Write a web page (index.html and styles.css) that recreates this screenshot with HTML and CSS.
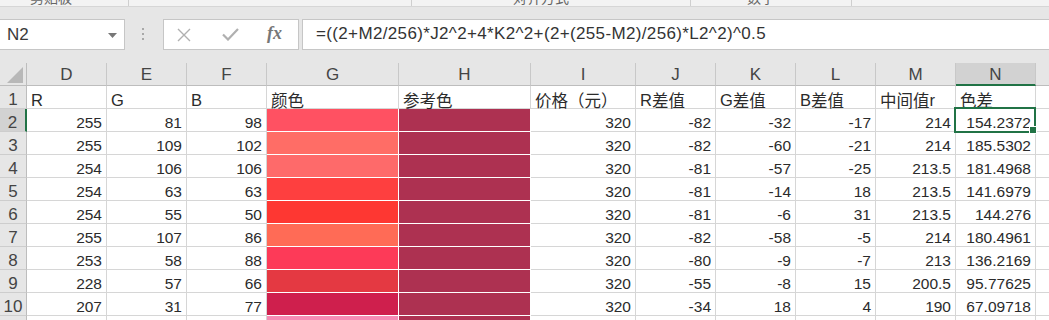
FILE: index.html
```html
<!DOCTYPE html>
<html lang="zh">
<head>
<meta charset="utf-8">
<title>Sheet</title>
<link rel="stylesheet" href="styles.css">
</head>
<body>
<div class="app">
  <div class="ribbon">
    <div class="grp g1"><span class="glabel">剪贴板</span></div>
    <div class="grp g2"></div>
    <div class="grp g3"><span class="glabel">对齐方式</span></div>
    <div class="grp g4"><span class="glabel">数字</span></div>
    <div class="grp g5"></div>
  </div>

  <div class="fbar">
    <div class="namebox">
      <span class="nb-text">N2</span>
      <svg class="nb-arrow" width="9" height="5" viewBox="0 0 9 5"><path d="M0 0H9L4.5 5Z" fill="#777"/></svg>
    </div>
    <div class="grip"><i></i><i></i><i></i></div>
    <div class="fbtns">
      <svg class="ico-x" width="14" height="14" viewBox="0 0 14 14"><path d="M1 1L13 13M13 1L1 13" stroke="#b0b0b0" stroke-width="1.4" fill="none"/></svg>
      <svg class="ico-ok" width="17" height="13" viewBox="0 0 17 13"><path d="M1 6.5L6 11.5L16 1" stroke="#b0b0b0" stroke-width="2.2" fill="none"/></svg>
      <span class="fx">fx</span>
    </div>
    <div class="finput">=((2+M2/256)*J2^2+4*K2^2+(2+(255-M2)/256)*L2^2)^0.5</div>
  </div>

  <div class="sheet">
    <div class="c corner"><svg width="16" height="16" viewBox="0 0 16 16"><path d="M16 0V16H0Z" fill="#b8b8b8"/></svg></div>
    <div class="c ch">D</div><div class="c ch">E</div><div class="c ch">F</div><div class="c ch">G</div><div class="c ch">H</div><div class="c ch">I</div><div class="c ch">J</div><div class="c ch">K</div><div class="c ch">L</div><div class="c ch">M</div><div class="c ch selh">N</div><div class="c ch">O</div>

    <div class="c rh">1</div>
    <div class="c t">R</div><div class="c t">G</div><div class="c t">B</div>
    <div class="c t"><span class="zh">颜色</span></div>
    <div class="c t"><span class="zh">参考色</span></div>
    <div class="c t"><span class="zh">价格（元）</span></div>
    <div class="c t">R<span class="zh">差值</span></div>
    <div class="c t">G<span class="zh">差值</span></div>
    <div class="c t">B<span class="zh">差值</span></div>
    <div class="c t"><span class="zh">中间值</span>r</div>
    <div class="c t"><span class="zh">色差</span></div>
    <div class="c"></div>

    <div class="c rh selr">2</div>
    <div class="c n">255</div><div class="c n">81</div><div class="c n">98</div>
    <div class="c fill" style="background:rgb(255,81,98)"></div><div class="c fill ref"></div>
    <div class="c n">320</div><div class="c n">-82</div><div class="c n">-32</div><div class="c n">-17</div><div class="c n">214</div><div class="c n sel">154.2372</div><div class="c"></div>

    <div class="c rh">3</div>
    <div class="c n">255</div><div class="c n">109</div><div class="c n">102</div>
    <div class="c fill" style="background:rgb(255,109,102)"></div><div class="c fill ref"></div>
    <div class="c n">320</div><div class="c n">-82</div><div class="c n">-60</div><div class="c n">-21</div><div class="c n">214</div><div class="c n">185.5302</div><div class="c"></div>

    <div class="c rh">4</div>
    <div class="c n">254</div><div class="c n">106</div><div class="c n">106</div>
    <div class="c fill" style="background:rgb(254,106,106)"></div><div class="c fill ref"></div>
    <div class="c n">320</div><div class="c n">-81</div><div class="c n">-57</div><div class="c n">-25</div><div class="c n">213.5</div><div class="c n">181.4968</div><div class="c"></div>

    <div class="c rh">5</div>
    <div class="c n">254</div><div class="c n">63</div><div class="c n">63</div>
    <div class="c fill" style="background:rgb(254,63,63)"></div><div class="c fill ref"></div>
    <div class="c n">320</div><div class="c n">-81</div><div class="c n">-14</div><div class="c n">18</div><div class="c n">213.5</div><div class="c n">141.6979</div><div class="c"></div>

    <div class="c rh">6</div>
    <div class="c n">254</div><div class="c n">55</div><div class="c n">50</div>
    <div class="c fill" style="background:rgb(254,55,50)"></div><div class="c fill ref"></div>
    <div class="c n">320</div><div class="c n">-81</div><div class="c n">-6</div><div class="c n">31</div><div class="c n">213.5</div><div class="c n">144.276</div><div class="c"></div>

    <div class="c rh">7</div>
    <div class="c n">255</div><div class="c n">107</div><div class="c n">86</div>
    <div class="c fill" style="background:rgb(255,107,86)"></div><div class="c fill ref"></div>
    <div class="c n">320</div><div class="c n">-82</div><div class="c n">-58</div><div class="c n">-5</div><div class="c n">214</div><div class="c n">180.4961</div><div class="c"></div>

    <div class="c rh">8</div>
    <div class="c n">253</div><div class="c n">58</div><div class="c n">88</div>
    <div class="c fill" style="background:rgb(253,58,88)"></div><div class="c fill ref"></div>
    <div class="c n">320</div><div class="c n">-80</div><div class="c n">-9</div><div class="c n">-7</div><div class="c n">213</div><div class="c n">136.2169</div><div class="c"></div>

    <div class="c rh">9</div>
    <div class="c n">228</div><div class="c n">57</div><div class="c n">66</div>
    <div class="c fill" style="background:rgb(228,57,66)"></div><div class="c fill ref"></div>
    <div class="c n">320</div><div class="c n">-55</div><div class="c n">-8</div><div class="c n">15</div><div class="c n">200.5</div><div class="c n">95.77625</div><div class="c"></div>

    <div class="c rh">10</div>
    <div class="c n">207</div><div class="c n">31</div><div class="c n">77</div>
    <div class="c fill" style="background:rgb(207,31,77)"></div><div class="c fill ref"></div>
    <div class="c n">320</div><div class="c n">-34</div><div class="c n">18</div><div class="c n">4</div><div class="c n">190</div><div class="c n">67.09718</div><div class="c"></div>

    <div class="c rh">11</div>
    <div class="c"></div><div class="c"></div><div class="c"></div>
    <div class="c fill" style="background:rgb(245,140,180)"></div><div class="c fill ref"></div>
    <div class="c"></div><div class="c"></div><div class="c"></div><div class="c"></div><div class="c"></div><div class="c"></div><div class="c"></div>
  </div>
</div>
</body>
</html>
```

FILE: styles.css
```css
* { box-sizing: border-box; }
html, body { margin: 0; padding: 0; }
body {
  width: 1049px;
  height: 320px;
  overflow: hidden;
  background: #ffffff;
  font-family: "Liberation Sans", "Noto Sans CJK SC", sans-serif;
  color: #333;
}
.app { width: 1049px; overflow: hidden; }

/* ribbon remnant */
.ribbon {
  display: flex;
  height: 7px;
  background: #f3f3f3;
  border-bottom: 1px solid #d6d6d6;
  overflow: hidden;
}
.grp { height: 6px; border-right: 1px solid #cfcfcf; overflow: hidden; }
.g1 { width: 129px; padding-left: 30px; }
.g2 { width: 283px; }
.g3 { width: 279px; padding-left: 101px; }
.g4 { width: 161px; padding-left: 56px; }
.g5 { flex: 1; border-right: none; }
.glabel {
  display: block;
  font-family: "Noto Sans CJK SC", sans-serif;
  font-size: 14px;
  line-height: 14px;
  margin-top: -10px;
  color: #666;
  white-space: nowrap;
}

/* formula bar */
.fbar {
  display: flex;
  align-items: flex-start;
  height: 56px;
  padding-top: 12px;
  background: #e6e6e6;
}
.namebox {
  display: flex;
  align-items: center;
  justify-content: space-between;
  width: 126px;
  height: 31px;
  margin-left: -1px;
  padding: 0 7px 0 7px;
  background: #fff;
  border: 1px solid #c6c6c6;
}
.nb-text { font-size: 17px; color: #3a3a3a; }
.nb-arrow { display: block; margin-top: 1px; }
.grip {
  display: flex;
  flex-direction: column;
  gap: 3px;
  margin: 9px 0 0 17px;
}
.grip i { display: block; width: 2px; height: 2px; background: #a8a8a8; }
.fbtns {
  display: flex;
  align-items: center;
  width: 136px;
  height: 31px;
  margin-left: 19px;
  padding-left: 13px;
  background: #fff;
  border: 1px solid #c6c6c6;
}
.ico-x { display: block; }
.ico-ok { display: block; margin-left: 31px; }
.fx {
  margin-left: 28px;
  font-family: "Liberation Serif", serif;
  font-style: italic;
  font-weight: bold;
  font-size: 18px;
  color: #777;
  margin-top: -2px;
}
.finput {
  flex: 1;
  height: 31px;
  margin-left: 3px;
  margin-right: -2px;
  padding-left: 13px;
  background: #fff;
  border: 1px solid #c6c6c6;
  font-size: 17px;
  letter-spacing: 0.35px;
  line-height: 28px;
  color: #333;
  white-space: nowrap;
  overflow: hidden;
}

/* sheet */
.sheet {
  display: grid;
  grid-template-columns: 27px 80px 80px 80px 132px 132px 105px 80px 80px 80px 80px 80px 60px;
  grid-auto-rows: 23px;
  width: 1049px;
  overflow: hidden;
}
.c {
  display: flex;
  align-items: flex-end;
  padding: 0 4px 0 4px;
  border-right: 1px solid #d6d6d6;
  border-bottom: 1px solid #d6d6d6;
  font-size: 15.5px;
  line-height: 16px;
  white-space: nowrap;
  overflow: visible;
  min-width: 0;
  color: #2b2b2b;
}
.t { font-size: 16.5px; padding-left: 4px; }
.zh { font-family: "Noto Sans CJK SC", sans-serif; font-size: 16.5px; }
.n { justify-content: flex-end; }
.fill { border-right-color: #fff; border-bottom-color: #fff; }
.ref { background: rgb(173, 49, 81); }

.corner {
  background: #e6e6e6;
  border-right: 1px solid #bdbdbd;
  border-bottom: 1px solid #bdbdbd;
  padding: 0 3px 2px 0;
  justify-content: flex-end;
}
.corner svg { display: block; }
.ch {
  background: #e6e6e6;
  border-right: 1px solid #c8c8c8;
  border-bottom: 1px solid #bdbdbd;
  justify-content: center;
  font-size: 17px;
  line-height: 18px;
  color: #444;
  padding-bottom: 1px;
}
.selh {
  background: #d2d2d2;
  border-bottom: 2px solid #217346;
  padding-bottom: 0;
}
.rh {
  background: #e6e6e6;
  border-right: 1px solid #bdbdbd;
  border-bottom: 1px solid #cdcdcd;
  justify-content: center;
  padding: 0;
  font-size: 17px;
  line-height: 17px;
  color: #444;
}
.selr {
  background: #d2d2d2;
  border-right: 2px solid #217346;
}
.sel { position: relative; }
.sel::before {
  content: "";
  position: absolute;
  left: -2px;
  top: -2px;
  right: -1px;
  bottom: -2px;
  border: 2px solid #217346;
}
.sel::after {
  content: "";
  position: absolute;
  right: -2px;
  bottom: -3px;
  width: 6px;
  height: 6px;
  background: #217346;
  border: 1px solid #fff;
}
```
